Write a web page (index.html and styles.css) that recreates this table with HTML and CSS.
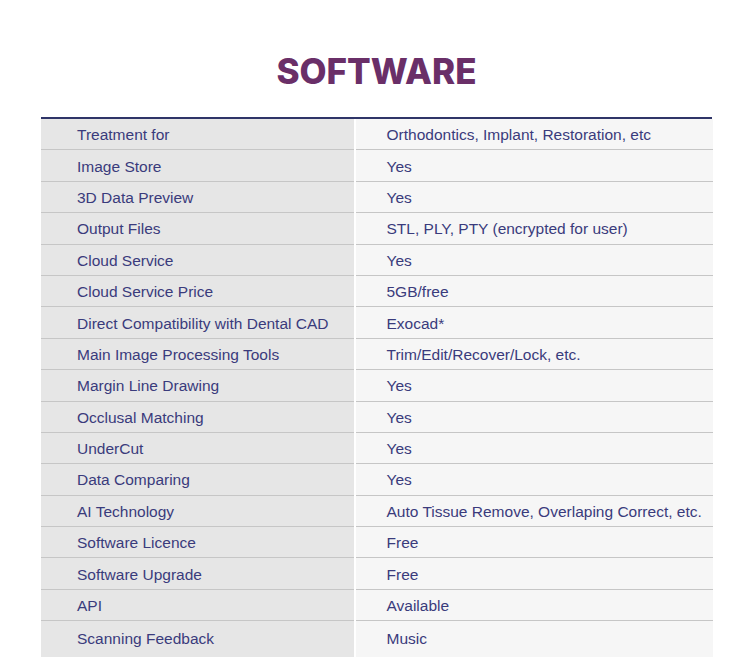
FILE: index.html
```html
<!DOCTYPE html>
<html lang="en">
<head>
<meta charset="utf-8">
<title>Software</title>
<link rel="stylesheet" href="styles.css">
</head>
<body>
<main class="page">
  <h1 class="title">SOFTWARE</h1>
  <div class="spec">
    <div class="row"><div class="key">Treatment for</div><div class="val">Orthodontics, Implant, Restoration, etc</div></div>
    <div class="row"><div class="key">Image Store</div><div class="val">Yes</div></div>
    <div class="row"><div class="key">3D Data Preview</div><div class="val">Yes</div></div>
    <div class="row"><div class="key">Output Files</div><div class="val">STL, PLY, PTY (encrypted for user)</div></div>
    <div class="row"><div class="key">Cloud Service</div><div class="val">Yes</div></div>
    <div class="row"><div class="key">Cloud Service Price</div><div class="val">5GB/free</div></div>
    <div class="row"><div class="key">Direct Compatibility with Dental CAD</div><div class="val">Exocad*</div></div>
    <div class="row"><div class="key">Main Image Processing Tools</div><div class="val">Trim/Edit/Recover/Lock, etc.</div></div>
    <div class="row"><div class="key">Margin Line Drawing</div><div class="val">Yes</div></div>
    <div class="row"><div class="key">Occlusal Matching</div><div class="val">Yes</div></div>
    <div class="row"><div class="key">UnderCut</div><div class="val">Yes</div></div>
    <div class="row"><div class="key">Data Comparing</div><div class="val">Yes</div></div>
    <div class="row"><div class="key">AI Technology</div><div class="val">Auto Tissue Remove, Overlaping Correct, etc.</div></div>
    <div class="row"><div class="key">Software Licence</div><div class="val">Free</div></div>
    <div class="row"><div class="key">Software Upgrade</div><div class="val">Free</div></div>
    <div class="row"><div class="key">API</div><div class="val">Available</div></div>
    <div class="row row-last"><div class="key">Scanning Feedback</div><div class="val">Music</div></div>
  </div>
</main>
</body>
</html>
```

FILE: styles.css
```css
html, body {
  margin: 0;
  padding: 0;
  background: #ffffff;
}

.page {
  width: 750px;
  padding: 51px 0 0 41px;
  box-sizing: border-box;
}

.title {
  margin: 0;
  width: 671px;
  height: 66px;
  text-align: center;
  font-family: Inter, "Liberation Sans", sans-serif;
  font-weight: 800;
  font-size: 35px;
  line-height: 40px;
  color: #6a2f68;
}

.spec {
  width: 671px;
  border-top: 2px solid #2f3568;
  font-family: "Liberation Sans", Arial, sans-serif;
  font-size: 15.5px;
  color: #3a3b7c;
}

.row {
  display: grid;
  grid-template-columns: 312.5px 357px;
  column-gap: 2px;
  height: 31.4px;
}

.key,
.val {
  display: flex;
  align-items: center;
  box-sizing: border-box;
  padding-top: 2px;
  border-bottom: 1.5px solid #c6c6c6;
  white-space: nowrap;
}

.key {
  background: #e6e6e6;
  padding-left: 36px;
}

.val {
  background: #f6f6f6;
  padding-left: 31px;
}

.row-last {
  height: 36px;
}

.row-last .key,
.row-last .val {
  border-bottom: none;
  padding-bottom: 3px;
}
```
